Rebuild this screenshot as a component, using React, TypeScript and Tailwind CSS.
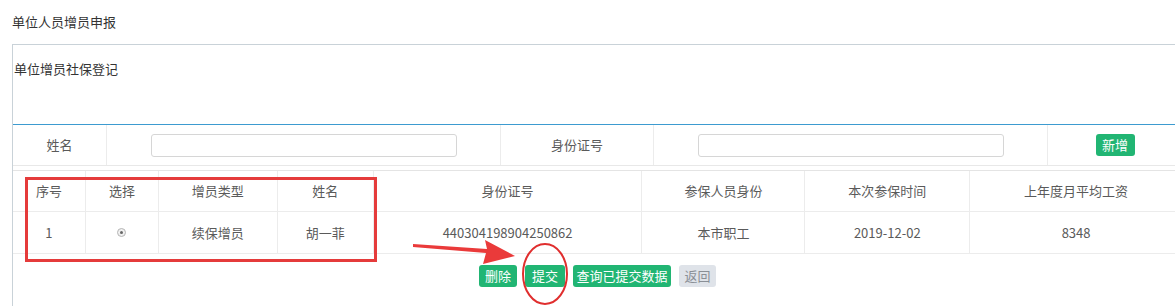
const cols = [
  { title: "序号", w: 73, v: "1" },
  { title: "选择", w: 73, v: "radio" },
  { title: "增员类型", w: 119, v: "续保增员" },
  { title: "姓名", w: 96, v: "胡一菲" },
  { title: "身份证号", w: 269, v: "440304198904250862" },
  { title: "参保人员身份", w: 163, v: "本市职工" },
  { title: "本次参保时间", w: 165, v: "2019-12-02" },
  { title: "上年度月平均工资", w: 212, v: "8348" },
];

function Radio() {
  return (
    <span className="inline-flex h-[9px] w-[9px] items-center justify-center rounded-full border border-[#b5b5b5] bg-[#f0f0f0]">
      <span className="h-[3px] w-[3px] rounded-full bg-[#666]" />
    </span>
  );
}

export default function App() {
  return (
    <div
      className="relative h-[306px] w-[1175px] overflow-hidden bg-white text-[13px] text-[#5a5a5a]"
      style={{ fontFamily: '"Microsoft YaHei", "Noto Sans CJK SC", sans-serif' }}
    >
      <div className="flex h-[44px] items-center pl-[12px] text-[#333]">单位人员增员申报</div>

      <div className="ml-[12px] h-[262px] w-[1170px] border-l border-t border-[#c9d2d8]">
        <div className="h-[80px] border-b border-[#3d9bd0] pl-[1px] pt-[14px] text-[#333]">单位增员社保登记</div>

        {/* search row */}
        <div className="flex h-[41px] border-b border-[#e8e8e8]">
          <div className="flex w-[94px] items-center justify-center border-r border-[#ececec]">姓名</div>
          <div className="flex w-[394px] items-center border-r border-[#ececec] pl-[44px]">
            <div className="h-[23px] w-[306px] rounded-[3px] border border-[#d6d6d6]" />
          </div>
          <div className="flex w-[153px] items-center justify-center border-r border-[#ececec]">身份证号</div>
          <div className="flex w-[394px] items-center border-r border-[#ececec] pl-[44px]">
            <div className="h-[23px] w-[306px] rounded-[3px] border border-[#d6d6d6]" />
          </div>
          <div className="flex flex-1 items-center justify-center">
            <button className="h-[22px] w-[39px] rounded-[3px] bg-[#21b573] text-[13px] text-white">新增</button>
          </div>
        </div>

        {/* table */}
        <div className="mt-[4px] border-t border-[#e4e4e4]">
          <div className="flex h-[41px] border-b border-[#ececec]">
            {cols.map((c, i) => (
              <div
                key={c.title}
                style={{ width: c.w }}
                className={`flex items-center justify-center ${i < cols.length - 1 ? "border-r border-[#ececec]" : ""}`}
              >
                {c.title}
              </div>
            ))}
          </div>
          <div className="flex h-[42px] border-b border-[#ececec]">
            {cols.map((c, i) => (
              <div
                key={c.title}
                style={{ width: c.w }}
                className={`flex items-center justify-center ${i < cols.length - 1 ? "border-r border-[#ececec]" : ""}`}
              >
                {c.v === "radio" ? <Radio /> : c.v}
              </div>
            ))}
          </div>
        </div>

        {/* actions */}
        <div className="mt-[11px] flex justify-center gap-[8px]">
          <button className="h-[22px] w-[38px] rounded-[3px] bg-[#21b573] text-white">删除</button>
          <button className="h-[22px] w-[40px] rounded-[3px] bg-[#21b573] text-white">提交</button>
          <button className="h-[22px] w-[98px] rounded-[3px] bg-[#21b573] text-white">查询已提交数据</button>
          <button className="h-[22px] w-[37px] rounded-[3px] bg-[#dfe3e9] text-[#8a8f96]">返回</button>
        </div>
      </div>

      {/* annotations */}
      <svg className="pointer-events-none absolute left-0 top-0" width="1175" height="306">
        <rect x="26.5" y="178.5" width="349" height="82" fill="none" stroke="#e53b3b" strokeWidth="3" />
        <ellipse cx="545" cy="274" rx="22" ry="30" fill="none" stroke="#e02e2e" strokeWidth="2" />
        <polygon points="413,244 487,249 485,240 515,256 483,264 486,253 413,247" fill="#ea3a3a" />
      </svg>
    </div>
  );
}
